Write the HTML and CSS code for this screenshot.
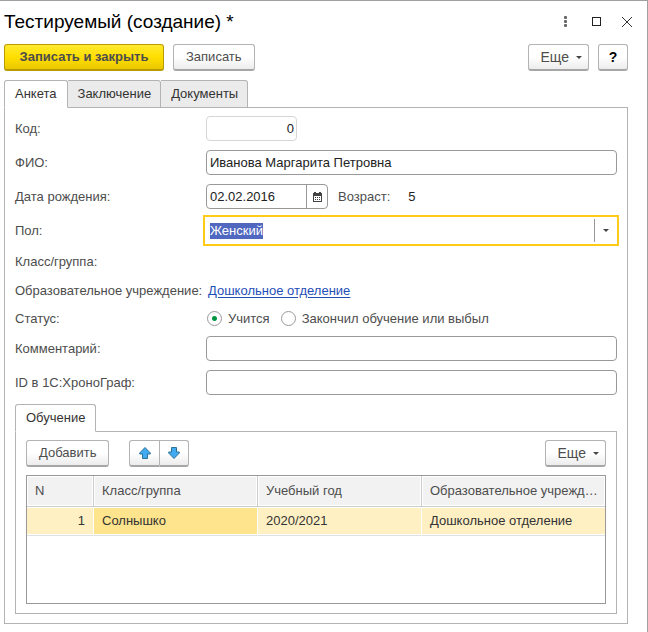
FILE: index.html
```html
<!DOCTYPE html>
<html lang="ru">
  <head>
    <meta charset="UTF-8" />
    <meta name="viewport" content="width=device-width, initial-scale=1.0" />
    <title>Тестируемый (создание)</title>
    <link rel="stylesheet" href="styles.css">
  </head>
  <body>
    <div class="window">
      <header class="title-bar">
        <h1>Тестируемый (создание) *</h1>
        <div class="window-controls">
          <button type="button" class="icon-btn" aria-label="Меню">
            <svg width="12" height="12" viewBox="0 0 12 12" fill="#666">
              <rect x="5" y="0" width="3" height="3" rx="1" />
              <rect x="5" y="4" width="3" height="3" rx="1" />
              <rect x="5" y="8" width="3" height="3" rx="1" />
            </svg>
          </button>
          <button type="button" class="icon-btn" aria-label="Развернуть">
            <svg width="12" height="12" viewBox="0 0 12 12" fill="none" stroke="#222">
              <rect x="2.5" y="1.5" width="8" height="8" />
            </svg>
          </button>
          <button type="button" class="icon-btn" aria-label="Закрыть">
            <svg width="12" height="12" viewBox="0 0 12 12" fill="none" stroke="#333">
              <path d="M1 1L11 11M11 1L1 11" />
            </svg>
          </button>
        </div>
      </header>

      <div class="toolbar">
        <button type="button" class="btn btn-primary">Записать и закрыть</button>
        <button type="button" class="btn">Записать</button>
        <button type="button" class="btn btn-more push-right">Еще <span class="caret"></span></button>
        <button type="button" class="btn btn-help">?</button>
      </div>

      <div class="tabs" role="tablist">
        <button type="button" class="tab active" role="tab">Анкета</button>
        <button type="button" class="tab" role="tab">Заключение</button>
        <button type="button" class="tab" role="tab">Документы</button>
      </div>

      <form class="panel">
        <div class="row">
          <label class="name" for="code">Код:</label>
          <input type="text" id="code" class="field field-code" value="0" readonly />
        </div>

        <div class="row">
          <label class="name" for="fullName">ФИО:</label>
          <input type="text" id="fullName" class="field" value="Иванова Маргарита Петровна" />
        </div>

        <div class="row">
          <label class="name" for="birthDate">Дата рождения:</label>
          <div class="date-field">
            <input type="text" id="birthDate" value="02.02.2016" />
            <button type="button" class="calendar-btn" aria-label="Выбрать дату">
              <svg width="9" height="10" viewBox="0 0 9 10" fill="#444">
                <path fill-rule="evenodd" d="M0 1h1V0h2v1h3V0h2v1h1v9H0zM1 4v5h7V4z" />
                <path d="M2 5h1v1H2zM4 5h1v1H4zM6 5h1v1H6zM2 7h1v1H2zM4 7h1v1H4zM6 7h1v1H6z" />
              </svg>
            </button>
          </div>
          <span class="age-name">Возраст:</span>
          <span class="age">5</span>
        </div>

        <div class="row">
          <label class="name" for="gender">Пол:</label>
          <div class="select-field">
            <select id="gender">
              <option selected>Женский</option>
              <option>Мужской</option>
            </select>
            <span class="select-arrow"><span class="caret"></span></span>
          </div>
        </div>

        <div class="row row-text">
          <span class="name">Класс/группа:</span>
        </div>

        <div class="row row-text">
          <span class="name">Образовательное учреждение:</span>
          <a href="#">Дошкольное отделение</a>
        </div>

        <div class="row row-radio">
          <span class="name">Статус:</span>
          <label class="radio"><input type="radio" name="status" checked />Учится</label>
          <label class="radio"><input type="radio" name="status" />Закончил обучение или выбыл</label>
        </div>

        <div class="row">
          <label class="name" for="comment">Комментарий:</label>
          <input type="text" id="comment" class="field" />
        </div>

        <div class="row">
          <label class="name" for="chronoId">ID в 1С:ХроноГраф:</label>
          <input type="text" id="chronoId" class="field" />
        </div>

        <section class="group">
          <div class="tabs" role="tablist">
            <button type="button" class="tab active" role="tab">Обучение</button>
          </div>
          <div class="panel panel-inner">
            <div class="toolbar">
              <button type="button" class="btn">Добавить</button>
              <div class="btn-group">
                <button type="button" class="btn btn-arrow" aria-label="Вверх">
                  <svg width="12" height="14" viewBox="0 0 12 14">
                    <path fill="#41aaf0" stroke="#2b7299" d="M6 1.5L11.3 7V8H8.5V12.5H3.5V8H.7V7z" />
                  </svg>
                </button>
                <button type="button" class="btn btn-arrow" aria-label="Вниз">
                  <svg width="12" height="14" viewBox="0 0 12 14">
                    <path fill="#41aaf0" stroke="#2b7299" d="M6 12.5L11.3 7V6H8.5V1.5H3.5V6H.7V7z" />
                  </svg>
                </button>
              </div>
              <button type="button" class="btn btn-more push-right">Еще <span class="caret"></span></button>
            </div>

            <div class="table-box">
              <table>
                <thead>
                  <tr>
                    <th class="col-num">N</th>
                    <th class="col-mid">Класс/группа</th>
                    <th class="col-mid">Учебный год</th>
                    <th>Образовательное учреждение</th>
                  </tr>
                </thead>
                <tbody>
                  <tr>
                    <td class="num">1</td>
                    <td class="current">Солнышко</td>
                    <td>2020/2021</td>
                    <td>Дошкольное отделение</td>
                  </tr>
                </tbody>
              </table>
            </div>
          </div>
        </section>
      </form>
    </div>
  </body>
</html>
```

FILE: styles.css
```css
* {
  box-sizing: border-box;
}

body {
  margin: 0;
  background-color: #fff;
  color: #4d4d4d;
  font-family: "Liberation Sans", Arial, sans-serif;
  font-size: 13px;
  line-height: 16px;
}

button,
input,
select {
  margin: 0;
  font: inherit;
  color: inherit;
}

.window {
  display: flex;
  flex-direction: column;
  min-height: 100vh;
  padding: 8px 19px 8px 4px;
  border-top: 1px solid #a0a0a0;
  border-right: 1px solid #a0a0a0;
}

/* title */
.title-bar {
  display: flex;
  align-items: center;
  justify-content: space-between;
  height: 26px;
  margin-bottom: 9px;
}

h1 {
  margin: 0;
  color: #000;
  font-size: 19px;
  font-weight: normal;
  line-height: 24px;
}

.window-controls {
  display: flex;
  gap: 19px;
  margin-right: -5px;
}

.icon-btn {
  display: flex;
  padding: 0;
  border: none;
  background: none;
}

/* buttons */
.toolbar {
  display: flex;
  gap: 9px;
  margin-bottom: 8px;
}

.btn {
  height: 27px;
  padding: 0 12px;
  border: 1px solid #b3b3b3;
  border-bottom: 2px solid #a6a6a6;
  border-radius: 3px;
  background: linear-gradient(#fff 50%, #ececec);
  white-space: nowrap;
}

.window > .toolbar {
  margin-bottom: 9px;
}

.btn-primary {
  min-width: 160px;
  border-color: #b89b00;
  background: linear-gradient(#ffe930, #ffdf00 50%, #ebc800);
  font-weight: bold;
}

.btn-more {
  display: flex;
  align-items: center;
  gap: 7px;
  padding: 0 6px 0 12px;
  font-size: 14px;
}

.btn-help {
  width: 30px;
  padding: 0;
  color: #000;
  font-size: 14px;
  font-weight: bold;
}

.push-right {
  margin-left: auto;
}

.caret {
  border: 3px solid transparent;
  border-top-color: #444;
  border-bottom: none;
}

.btn-group {
  display: flex;
  margin-left: 11px;
}

.btn-arrow {
  display: flex;
  align-items: center;
  justify-content: center;
  width: 29px;
  padding: 0;
}

.btn-arrow:first-child {
  width: 31px;
  border-radius: 3px 0 0 3px;
}

.btn-arrow:last-child {
  border-left: none;
  border-radius: 0 3px 3px 0;
}

/* tabs */
.tabs {
  display: flex;
  z-index: 1;
  margin-bottom: -1px;
}

.tab {
  height: 28px;
  padding: 0 10px;
  border: 1px solid #b3b3b3;
  border-left: none;
  border-radius: 0 3px 0 0;
  background-color: #ebebeb;
  color: #333;
}

.tab.active {
  border-left: 1px solid #b3b3b3;
  border-bottom-color: #fff;
  border-radius: 3px 3px 0 0;
  background-color: #fff;
}

.tab:not(.active) {
  padding: 0 9px 0 10px;
}

.panel {
  display: flex;
  flex: 1;
  flex-direction: column;
  gap: 9px;
  padding: 8px 10px 9px;
  border: 1px solid #b3b3b3;
}

.panel-inner {
  gap: 0;
}

.group {
  display: flex;
  flex: 1;
  flex-direction: column;
}

/* form rows */
.row {
  display: flex;
  align-items: center;
  height: 25px;
}

.row-text {
  height: 20px;
}

.row-radio {
  height: 17px;
}

.name {
  flex: none;
  width: 191px;
  white-space: nowrap;
}

.field {
  flex: 1;
  min-width: 0;
  height: 25px;
  padding: 0 3px;
  border: 1px solid #999;
  border-radius: 4px;
  background-color: #fff;
  color: #222;
}

.field-code {
  flex: none;
  width: 91px;
  padding: 0 2px;
  border-color: #d6d6d6;
  text-align: right;
}

.date-field {
  display: flex;
  width: 122px;
  height: 25px;
  border: 1px solid #999;
  border-radius: 4px;
}

.date-field input {
  flex: 1;
  min-width: 0;
  padding: 0 3px;
  border: none;
  background: none;
  color: #222;
}

.calendar-btn {
  display: flex;
  align-items: center;
  justify-content: center;
  width: 21px;
  padding: 0;
  border: none;
  border-left: 1px solid #999;
  background: none;
}

.age-name {
  margin-left: 10px;
}

.age {
  margin-left: 18px;
  color: #222;
}

.select-field {
  display: flex;
  flex: 1;
  height: 25px;
  margin-right: 1px;
  outline: 2px solid #ffcb14;
  outline-offset: 1px;
}

/* the current value is shown as selected text */
.select-field select {
  flex: 1;
  padding: 0 4px;
  border: none;
  appearance: none;
  background: linear-gradient(#5068c0, #5068c0) 4px center / 53px 16px no-repeat;
  color: #fff;
}

.select-field option {
  color: #222;
}

.select-arrow {
  display: flex;
  align-items: center;
  justify-content: center;
  width: 22px;
  margin: 1px 0;
  border-left: 1px solid #999;
}

a {
  margin-left: 2px;
  color: #1f4fb8;
  text-underline-offset: 2px;
}

.radio {
  display: flex;
  align-items: center;
  gap: 6px;
  margin-right: 10px;
}

.radio input {
  width: 15px;
  height: 15px;
  margin-left: 1px;
  border: 1px solid #999;
  border-radius: 50%;
  appearance: none;
  background-color: #fff;
}

.radio input:checked {
  background-image: radial-gradient(circle, #00963f 2px, transparent 3px);
}

/* table */
.table-box {
  flex: 1;
  border: 1px solid #999;
}

table {
  width: 100%;
  border-spacing: 0;
  table-layout: fixed;
}

th,
td {
  overflow: hidden;
  padding: 0 8px;
  text-align: left;
  text-overflow: ellipsis;
  white-space: nowrap;
}

th {
  height: 31px;
  border-right: 1px solid #ccc;
  border-bottom: 1px solid #ccc;
  background-color: #f2f2f2;
  font-weight: normal;
  box-shadow: inset 0 0 0 1px #fff;
}

td {
  height: 29px;
  border-right: 1px solid #fff;
  border-bottom: 1px solid #e0e0e0;
  background-color: #fff0c4;
  color: #333;
  box-shadow: inset 0 1px #fff, inset 0 -1px #fff;
}

th:last-child,
td:last-child {
  padding-right: 4px;
  border-right: none;
}

.col-num {
  width: 67px;
}

.col-mid {
  width: 164px;
}

.num {
  text-align: right;
}

.current {
  background-color: #fee48c;
}
```
